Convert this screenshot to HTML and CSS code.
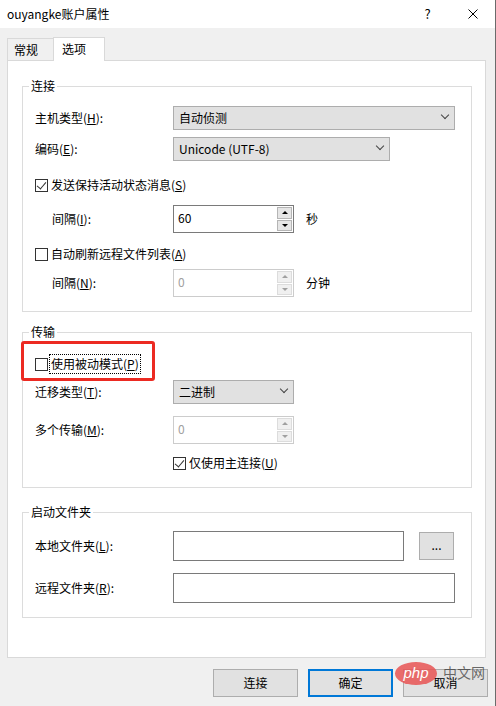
FILE: index.html
```html
<!DOCTYPE html>
<html lang="zh-CN">
<head>
  <meta charset="UTF-8" />
  <title>ouyangke账户属性</title>
  <link rel="stylesheet" href="styles.css">
</head>
<body>
  <div class="window">
    <div class="titlebar">
      <span class="title">ouyangke账户属性</span>
      <span class="tb-btn">?</span>
      <span class="tb-btn">
        <svg width="10" height="10" viewBox="0 0 10 10"><path d="M0.5 0.5 L9.5 9.5 M9.5 0.5 L0.5 9.5" stroke="#000" stroke-width="1" fill="none"/></svg>
      </span>
    </div>

    <div class="client">
      <div class="tabs">
        <div class="tab">常规</div>
        <div class="tab active">选项</div>
      </div>

      <div class="panel">
        <!-- 连接 -->
        <fieldset class="group">
          <legend>连接</legend>
          <div class="row h24 m12">
            <span class="lbl">主机类型(<u>H</u>):</span>
            <div class="combo fill">自动侦测<span class="chev"></span></div>
          </div>
          <div class="row h24 m7">
            <span class="lbl">编码(<u>E</u>):</span>
            <div class="combo w217">Unicode (UTF-8)<span class="chev"></span></div>
          </div>
          <div class="row h16 m16">
            <span class="check on"></span>
            <span class="check-text">发送保持活动状态消息(<u>S</u>)</span>
          </div>
          <div class="row h28 m12">
            <span class="lbl sub">间隔(<u>I</u>):</span>
            <div class="spin">
              <span class="spin-val">60</span>
              <span class="spin-btns"><span class="sb up"></span><span class="sb down"></span></span>
            </div>
            <span class="unit">秒</span>
          </div>
          <div class="row h16 m13">
            <span class="check"></span>
            <span class="check-text">自动刷新远程文件列表(<u>A</u>)</span>
          </div>
          <div class="row h28 m7">
            <span class="lbl sub">间隔(<u>N</u>):</span>
            <div class="spin disabled">
              <span class="spin-val">0</span>
              <span class="spin-btns"><span class="sb up"></span><span class="sb down"></span></span>
            </div>
            <span class="unit">分钟</span>
          </div>
        </fieldset>

        <!-- 传输 -->
        <fieldset class="group g-mid">
          <legend>传输</legend>
          <div class="row h16 m16">
            <span class="check"></span>
            <span class="check-text focus">使用被动模式(<u>P</u>)</span>
          </div>
          <div class="row h24 m8">
            <span class="lbl">迁移类型(<u>T</u>):</span>
            <div class="combo w121">二进制<span class="chev"></span></div>
          </div>
          <div class="row h28 m12">
            <span class="lbl">多个传输(<u>M</u>):</span>
            <div class="spin disabled">
              <span class="spin-val">0</span>
              <span class="spin-btns"><span class="sb up"></span><span class="sb down"></span></span>
            </div>
          </div>
          <div class="row h16 m11">
            <span class="lbl"></span>
            <span class="check on"></span>
            <span class="check-text">仅使用主连接(<u>U</u>)</span>
          </div>
        </fieldset>

        <!-- 启动文件夹 -->
        <fieldset class="group g-last">
          <legend>启动文件夹</legend>
          <div class="row h30 m11">
            <span class="lbl">本地文件夹(<u>L</u>):</span>
            <div class="edit w231"></div>
            <div class="browse">...</div>
          </div>
          <div class="row h30 m12">
            <span class="lbl">远程文件夹(<u>R</u>):</span>
            <div class="edit fill"></div>
          </div>
        </fieldset>
      </div>

      <div class="buttons">
        <div class="btn">连接</div>
        <div class="btn default">确定</div>
        <div class="btn">取消</div>
      </div>
    </div>

    <div class="highlight"></div>
    <div class="watermark">
      <span class="wm-pill">php</span>
      <span class="wm-text">中文网</span>
    </div>
  </div>
</body>
</html>
```

FILE: styles.css
```css
body {
  margin: 0;
  font-family: "Noto Sans CJK SC", "Noto Sans", sans-serif;
  font-size: 12px;
  line-height: 16px;
  color: #000;
  background: #f0f0f0;
}
u {
  text-decoration-thickness: 1px;
  text-underline-offset: 1px;
}
.window {
  position: relative;
  width: 496px;
  height: 706px;
  box-sizing: border-box;
  border-right: 1px solid #6b6b6b;
  background: #f0f0f0;
  display: flex;
  flex-direction: column;
}
.titlebar {
  height: 28px;
  background: #fff;
  display: flex;
  align-items: center;
  padding-left: 7px;
}
.title {
  flex: 1;
}
.tb-btn {
  width: 45px;
  height: 28px;
  display: flex;
  align-items: center;
  justify-content: center;
  font-size: 13px;
}
.client {
  flex: 1;
  padding: 0 9px 0 7px;
  display: flex;
  flex-direction: column;
}
.tabs {
  display: flex;
  align-items: flex-end;
  height: 24px;
  margin-top: 9px;
  position: relative;
  z-index: 1;
}
.tab {
  box-sizing: border-box;
  width: 47px;
  height: 22px;
  margin-bottom: 1px;
  padding: 3px 0 0 6px;
  border: 1px solid #d9d9d9;
  border-bottom: none;
  background: #f0f0f0;
}
.tab.active {
  width: 52px;
  height: 24px;
  margin-bottom: 0;
  margin-left: -1px;
  padding: 3px 0 0 8px;
  background: #fff;
}
.panel {
  box-sizing: border-box;
  height: 598px;
  margin-top: -1px;
  padding: 17px 13px 0 14px;
  background: #fff;
  border: 1px solid #d9d9d9;
}
.group {
  margin: 0;
  min-width: 0;
  padding: 0 16px 14px 12px;
  border: 1px solid #dcdcdc;
}
.group legend {
  margin-left: -6px;
  padding: 0 2px;
  line-height: 16px;
}
.g-mid {
  margin-top: 12px;
  padding-bottom: 16px;
}
.g-last {
  margin-top: 16px;
}
.row {
  display: flex;
  align-items: center;
}
.h16 { height: 16px; }
.h24 { height: 24px; }
.h28 { height: 28px; }
.h30 { height: 30px; }
.m7 { margin-top: 7px; }
.m8 { margin-top: 8px; }
.m11 { margin-top: 11px; }
.m12 { margin-top: 12px; }
.m13 { margin-top: 13px; }
.m16 { margin-top: 16px; }
.lbl {
  width: 138px;
  flex-shrink: 0;
}
.lbl.sub {
  padding-left: 17px;
  box-sizing: border-box;
}
.fill { flex: 1; }
.w121 { width: 121px; }
.w217 { width: 217px; }
.w231 { width: 231px; }
.combo {
  box-sizing: border-box;
  height: 24px;
  display: flex;
  align-items: center;
  padding-left: 5px;
  background: #e1e1e1;
  border: 1px solid #adadad;
}
.chev {
  margin-left: auto;
  margin-right: 6px;
  width: 5px;
  height: 5px;
  border-right: 1px solid #444;
  border-bottom: 1px solid #444;
  transform: translateY(-3px) rotate(45deg);
}
.check {
  box-sizing: border-box;
  width: 13px;
  height: 13px;
  flex-shrink: 0;
  border: 1px solid #333;
  background: #fff;
  position: relative;
}
.check.on::after {
  content: "";
  position: absolute;
  left: 3px;
  top: 0px;
  width: 4px;
  height: 8px;
  border-right: 1px solid #333;
  border-bottom: 1px solid #333;
  transform: rotate(40deg);
}
.check-text {
  margin-left: 3px;
}
.check-text.focus {
  margin-left: 2px;
  padding: 1px 1px;
  outline: 1px dotted #000;
}
.spin {
  box-sizing: border-box;
  width: 121px;
  height: 28px;
  display: flex;
  border: 1px solid #7a7a7a;
  background: #fff;
}
.spin-val {
  flex: 1;
  padding: 4px 0 0 4px;
}
.spin-btns {
  width: 15px;
  padding: 1px 1px 1px 0;
  display: flex;
  flex-direction: column;
  gap: 1px;
}
.sb {
  flex: 1;
  background: #e6e6e6;
  border: 1px solid #b5b5b5;
  display: flex;
  align-items: center;
  justify-content: center;
}
.sb::after {
  content: "";
  border-left: 3px solid transparent;
  border-right: 3px solid transparent;
}
.sb.up::after { border-bottom: 3px solid #000; }
.sb.down::after { border-top: 3px solid #000; }
.spin.disabled {
  border-color: #cccccc;
}
.spin.disabled .spin-val {
  color: #a0a0a0;
}
.spin.disabled .sb {
  background: #f0f0f0;
  border-color: #dcdcdc;
}
.spin.disabled .sb.up::after { border-bottom-color: #a0a0a0; }
.spin.disabled .sb.down::after { border-top-color: #a0a0a0; }
.unit {
  margin-left: 12px;
}
.edit {
  box-sizing: border-box;
  height: 30px;
  border: 1px solid #7a7a7a;
  background: #fff;
}
.browse {
  box-sizing: border-box;
  width: 35px;
  height: 28px;
  margin-left: 15px;
  background: #e1e1e1;
  border: 1px solid #adadad;
  display: flex;
  justify-content: center;
  align-items: center;
  padding-bottom: 3px;
}
.buttons {
  display: flex;
  justify-content: flex-end;
  gap: 10px;
  margin-top: 11px;
  margin-right: -2px;
}
.btn {
  box-sizing: border-box;
  width: 85px;
  height: 28px;
  background: #e1e1e1;
  border: 1px solid #adadad;
  display: flex;
  align-items: center;
  justify-content: center;
}
.btn.default {
  border: 2px solid #0078d7;
}
.highlight {
  position: absolute;
  left: 21px;
  top: 341px;
  width: 128px;
  height: 34px;
  border: 3px solid #ec2a22;
  border-radius: 3px;
}
.watermark {
  position: absolute;
  left: 395px;
  top: 662px;
  display: flex;
  align-items: center;
  gap: 6px;
  pointer-events: none;
}
.wm-pill {
  width: 42px;
  height: 23px;
  border-radius: 50%;
  background: rgba(232, 84, 84, 0.85);
  color: #fff;
  font-family: "Liberation Sans", sans-serif;
  font-style: italic;
  font-size: 15px;
  line-height: 21px;
  text-align: center;
}
.wm-text {
  color: rgba(60, 60, 60, 0.75);
  font-size: 14px;
  line-height: 13px;
  margin-top: -2px;
}
```
